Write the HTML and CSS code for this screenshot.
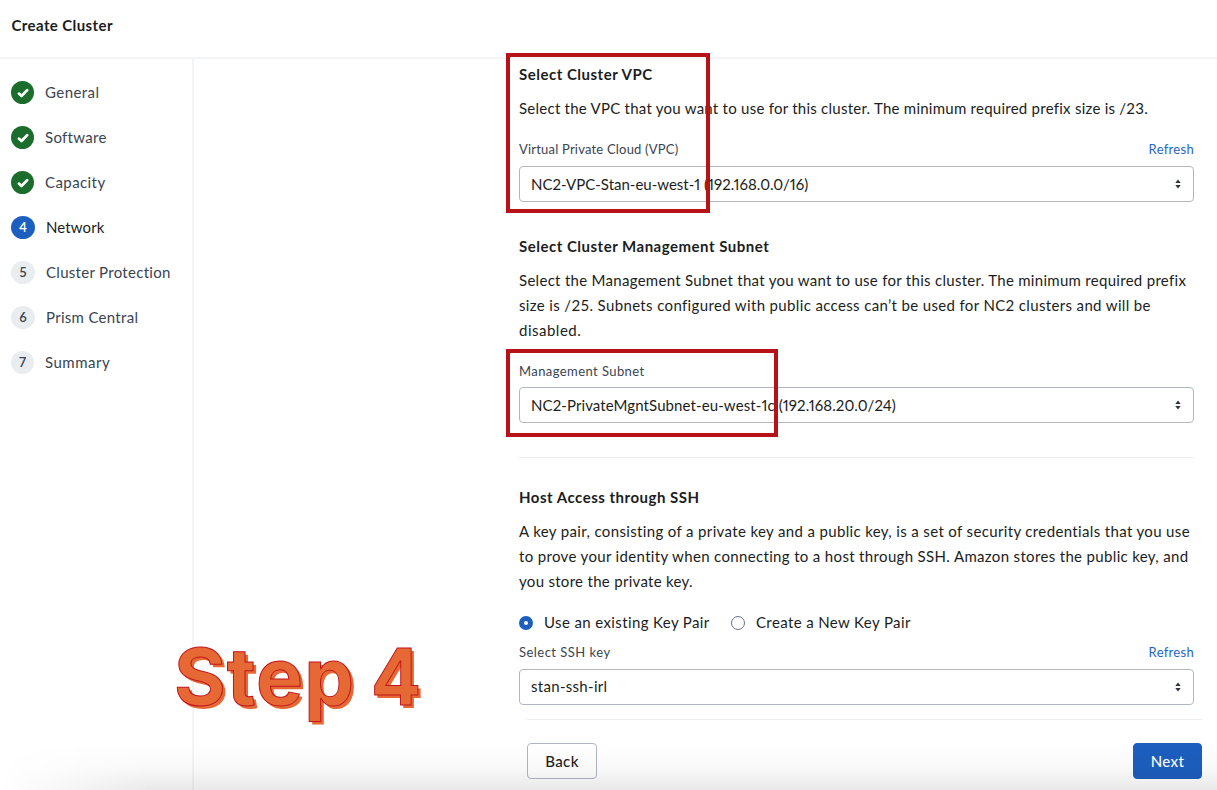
FILE: index.html
```html
<!DOCTYPE html>
<html lang="en">
<head>
<meta charset="utf-8">
<title>Create Cluster</title>
<link rel="stylesheet" href="styles.css">
</head>
<body>
<div class="page">
  <header class="header"><h1 class="page-title">Create Cluster</h1></header>
  <div class="body">
    <nav class="sidebar">
      <div class="step"><span class="badge done"><svg class="check" viewBox="0 0 12 10"><path d="M1.9 5.6 4.5 8 10.2 2.1"/></svg></span><span class="s1">General</span></div>
      <div class="step"><span class="badge done"><svg class="check" viewBox="0 0 12 10"><path d="M1.9 5.6 4.5 8 10.2 2.1"/></svg></span><span>Software</span></div>
      <div class="step"><span class="badge done"><svg class="check" viewBox="0 0 12 10"><path d="M1.9 5.6 4.5 8 10.2 2.1"/></svg></span><span class="s1">Capacity</span></div>
      <div class="step current"><span class="badge wide">4</span><span class="s4">Network</span></div>
      <div class="step"><span class="badge wide">5</span><span>Cluster Protection</span></div>
      <div class="step"><span class="badge wide">6</span><span>Prism Central</span></div>
      <div class="step"><span class="badge">7</span><span class="s7">Summary</span></div>
    </nav>
    <main class="main">
      <section class="section vpc">
        <h2 class="heading">Select Cluster VPC</h2>
        <p class="text"><span class="line l1">Select the VPC that you want to use for this cluster. The minimum required prefix size is /23.</span></p>
        <div class="label-row"><span class="lb1">Virtual Private Cloud (VPC)</span><a class="link">Refresh</a></div>
        <div class="select"><span class="value v1">NC2-VPC-Stan-eu-west-1 (192.168.0.0/16)</span><svg class="sort" viewBox="0 0 6 10"><path d="M3 .5 5.7 3.9H.3zM3 9.5.3 6.1h5.4z"/></svg></div>
      </section>
      <section class="section subnet">
        <h2 class="heading">Select Cluster Management Subnet</h2>
        <p class="text"><span class="line l2">Select the Management Subnet that you want to use for this cluster. The minimum required prefix</span><span class="line l3">size is /25. Subnets configured with public access can’t be used for NC2 clusters and will be</span><span class="line l4">disabled.</span></p>
        <div class="label-row"><span class="lb2">Management Subnet</span></div>
        <div class="select"><span class="value">NC2-PrivateMgntSubnet-eu-west-1c (192.168.20.0/24)</span><svg class="sort" viewBox="0 0 6 10"><path d="M3 .5 5.7 3.9H.3zM3 9.5.3 6.1h5.4z"/></svg></div>
      </section>
      <section class="section ssh">
        <h2 class="heading">Host Access through SSH</h2>
        <p class="text"><span class="line l3">A key pair, consisting of a private key and a public key, is a set of security credentials that you use</span><span class="line l6">to prove your identity when connecting to a host through SSH. Amazon stores the public key, and</span><span class="line">you store the private key.</span></p>
        <div class="radios">
          <span class="radio on"></span><span class="radio-name r1">Use an existing Key Pair</span>
          <span class="radio"></span><span class="radio-name">Create a New Key Pair</span>
        </div>
        <div class="label-row"><span class="lb3">Select SSH key</span><a class="link">Refresh</a></div>
        <div class="select"><span>stan-ssh-irl</span><svg class="sort" viewBox="0 0 6 10"><path d="M3 .5 5.7 3.9H.3zM3 9.5.3 6.1h5.4z"/></svg></div>
      </section>
      <footer class="footer"><button class="btn back">Back</button><button class="btn next">Next</button></footer>
    </main>
  </div>
  <div class="fade"></div>
  <div class="mark mark-vpc"></div>
  <div class="mark mark-subnet"></div>
  <div class="caption"><span>Step</span><span class="num">4</span></div>
</div>
</body>
</html>
```
FILE: styles.css
```css
* { box-sizing: border-box; }
body { margin: 0; background: #fff; color: #1b1d21; font: 15px/25px Lato, "Open Sans", sans-serif; letter-spacing: .3px; }
.page { position: relative; width: 1217px; height: 790px; overflow: hidden; display: flex; flex-direction: column; }
.header { height: 59px; flex: none; border-bottom: 2px solid #f2f4f5; padding: 13px 11.5px 0; }
.page-title { margin: 0; font-size: 15px; line-height: 25px; font-weight: 700; letter-spacing: .4px; }
.body { flex: 1; display: flex; min-height: 0; }
.sidebar { width: 194px; flex: none; border-right: 2px solid #f2f4f5; padding: 22px 0 0 11px; display: flex; flex-direction: column; gap: 22px; }
.step { display: flex; align-items: center; gap: 11px; height: 23px; color: #3a4450; white-space: nowrap; }
.s1 { letter-spacing: .42px; }
.s4 { letter-spacing: .1px; }
.s7 { letter-spacing: .5px; }
.badge { width: 23px; height: 23px; flex: none; border-radius: 50%; background: #e9edf0; display: flex; align-items: center; justify-content: center; font-size: 13px; font-weight: 600; letter-spacing: 0; }
.badge.wide { width: 24px; }
.badge.done { background: #1b6d2c; }
.current { color: #1b1d21; }
.current .badge { background: #1d5fbf; color: #fff; }
.check { width: 12px; height: 10px; fill: none; stroke: #fff; stroke-width: 2.7; stroke-linecap: round; stroke-linejoin: round; }
.main { padding: 3px 0 0 325px; width: 1000px; display: flex; flex-direction: column; }
.section { width: 675px; }
.heading { margin: 0; font-size: 15px; line-height: 25px; font-weight: 700; letter-spacing: .5px; }
.text { margin: 9px 0 0; }
.line { display: block; white-space: nowrap; }
.line + .line { margin-top: -.2px; }
.l1 { letter-spacing: .25px; }
.l2 { letter-spacing: .29px; }
.l3 { letter-spacing: .355px; }
.l4 { letter-spacing: .5px; }
.l6 { letter-spacing: .34px; }
.label-row { display: flex; justify-content: space-between; font-size: 13px; line-height: 20px; color: #3a4450; margin-top: 18px; }
.lb1 { letter-spacing: .2px; }
.lb2 { letter-spacing: .42px; }
.lb3 { letter-spacing: .47px; }
.link { color: #1f66c9; }
.select { height: 36px; margin-top: 7px; border: 1px solid #afb7c6; border-radius: 4px; padding: 0 12px 0 11px; display: flex; align-items: center; justify-content: space-between; white-space: nowrap; }
.value { font-variant-numeric: proportional-nums; letter-spacing: .1px; }
.v1 { letter-spacing: 0; }
.sort { width: 6px; height: 10px; fill: #2b3440; }
.subnet { margin-top: 32px; padding-bottom: 34px; border-bottom: 1px solid #ebecee; }
.subnet .label-row { margin-top: 18.4px; }
.subnet .select { margin-top: 6px; }
.ssh { margin-top: 27px; }
.radios { display: flex; align-items: center; height: 24px; margin-top: 17px; }
.radio { width: 14px; height: 14px; border: 1px solid #67748c; border-radius: 50%; }
.radio.on { border: 5px solid #1d5fbf; }
.radio-name { margin-left: 11px; white-space: nowrap; letter-spacing: .38px; }
.r1 { width: 187px; }
.ssh .label-row { margin-top: 7px; }
.footer { width: 675px; margin: 14px 0 0 8px; border-top: 1px solid #efeff1; padding-top: 23px; display: flex; justify-content: space-between; }
.btn { height: 36px; border-radius: 4px; border: 1px solid #afb7c6; background: #fff; color: #1b1d21; font: 500 15px Lato, sans-serif; letter-spacing: .4px; padding: 0; }
.back { width: 70px; }
.next { width: 69px; background: #1d5fbf; border-color: #1d5fbf; color: #fff; }
.fade { position: absolute; left: 0; right: 0; bottom: 0; height: 46px; background: linear-gradient(rgba(0,0,0,0), rgba(0,0,0,.025) 50%, rgba(0,0,0,.085)); -webkit-mask-image: linear-gradient(90deg, transparent, #000 150px); }
.mark { position: absolute; border: 4px solid #b81219; }
.mark-vpc { left: 506px; top: 53px; width: 204px; height: 160px; }
.mark-subnet { left: 506px; top: 349px; width: 272px; height: 88px; }
.caption { position: absolute; left: 174px; top: 629px; display: flex; gap: 15.5px; font: 700 79px/95px Inter, sans-serif; letter-spacing: 1.1px; color: #e66835; -webkit-text-stroke: 1px #c0151b; text-shadow: 3px 3px 0 #e66835; white-space: nowrap; }
.num { transform: scaleX(.94); transform-origin: left; }
```
